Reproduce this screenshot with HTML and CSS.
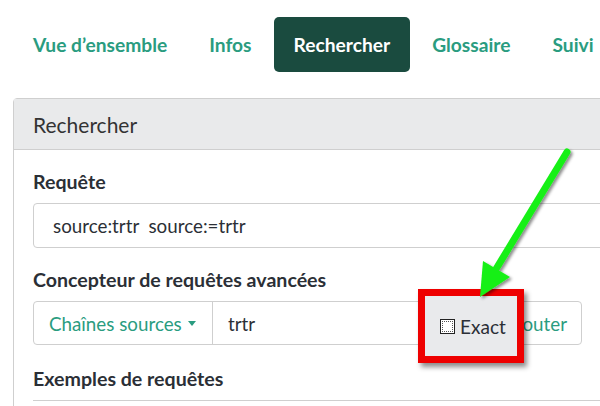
FILE: index.html
```html
<!DOCTYPE html>
<html lang="fr">
<head>
    <meta charset="UTF-8">
    <title>Rechercher</title>
    <link rel="stylesheet" href="styles.css">
</head>
<body>
    <!-- Onglets -->
    <nav class="tabs">
        <a class="tab" href="#">Vue d’ensemble</a>
        <a class="tab" href="#">Infos</a>
        <a class="tab active" href="#">Rechercher</a>
        <a class="tab" href="#">Glossaire</a>
        <a class="tab" href="#">Suivi</a>
    </nav>

    <!-- Panneau de recherche -->
    <section class="panel">
        <div class="panel-heading">Rechercher</div>
        <div class="panel-body">
            <label class="field-label">Requête</label>
            <div class="query-input">source:trtr&nbsp; source:=trtr</div>

            <label class="field-label">Concepteur de requêtes avancées</label>
            <div class="input-group">
                <div class="dropdown-btn">Chaînes sources <span class="caret"></span></div>
                <div class="group-text">trtr</div>
                <div class="group-addon"></div>
                <div class="group-btn">Ajouter</div>
            </div>

            <label class="field-label">Exemples de requêtes</label>
            <div class="table-top"></div>
        </div>
    </section>

    <!-- Annotation : case « Exact » encadrée -->
    <div class="highlight">
        <span class="check"></span>Exact
    </div>
    <svg class="arrow" width="600" height="406" viewBox="0 0 600 406">
        <defs>
            <filter id="shadow" x="-20%" y="-20%" width="140%" height="140%">
                <feDropShadow dx="2" dy="2" stdDeviation="1.5" flood-color="#000" flood-opacity="0.45"/>
            </filter>
        </defs>
        <g filter="url(#shadow)">
            <line x1="567" y1="152" x2="493" y2="274" stroke="#16f016" stroke-width="7" stroke-linecap="round"/>
            <polygon points="480,297 483,261 510,277" fill="#16f016"/>
        </g>
    </svg>
</body>
</html>
```

FILE: styles.css
```css
/* Base */
html, body {
    margin: 0;
    padding: 0;
    overflow: hidden;
    height: 406px;
}
body {
    font-family: Lato, "Open Sans", sans-serif;
    color: #2b2f36;
    background: #fff;
    position: relative;
}

/* Onglets */
.tabs {
    display: flex;
    gap: 2px;
    padding: 17px 0 0 13px;
    height: 55px;
    white-space: nowrap;
}
.tab {
    display: flex;
    align-items: center;
    padding: 0 20px;
    border-radius: 5px;
    color: #2a9c80;
    font-weight: 700;
    font-size: 19.2px;
    text-decoration: none;
}
.tab.active {
    background: #1a4b3f;
    color: #fff;
}

/* Panneau */
.panel {
    margin: 26px 0 0 13px;
    width: 640px;
    border: 1px solid #cfcfcf;
    border-radius: 4px;
}
.panel-heading {
    height: 50px;
    display: flex;
    align-items: center;
    padding-left: 19px;
    background: #e9eaeb;
    border-bottom: 1px solid #cfcfcf;
    font-size: 21px;
    color: #333;
}
.panel-body {
    padding: 20px 0 0 19px;
}
.field-label {
    display: block;
    font-weight: 700;
    font-size: 19.6px;
    line-height: 24px;
    margin-bottom: 9px;
}
.query-input {
    height: 43px;
    border: 1px solid #cfcfcf;
    border-radius: 4px;
    display: flex;
    align-items: center;
    padding-left: 19px;
    font-size: 18.8px;
    margin-bottom: 20px;
}

/* Groupe de saisie */
.input-group {
    width: 547px;
    height: 42px;
    border: 1px solid #cfcfcf;
    border-radius: 4px;
    display: flex;
    font-size: 18.8px;
    margin-bottom: 22px;
}
.dropdown-btn {
    width: 163px;
    padding-left: 15px;
    display: flex;
    align-items: center;
    color: #2a9c80;
    border-right: 1px solid #cfcfcf;
}
.caret {
    display: inline-block;
    margin-left: 6px;
    border-left: 4px solid transparent;
    border-right: 4px solid transparent;
    border-top: 5px solid #2a9c80;
}
.group-text {
    flex: 1;
    padding-left: 15px;
    display: flex;
    align-items: center;
}
.group-addon {
    width: 70px;
    background: #e9eaec;
}
.group-btn {
    width: 82px;
    display: flex;
    align-items: center;
    justify-content: flex-end;
    padding-right: 14px;
    box-sizing: border-box;
    color: #2a9c80;
}
.table-top {
    border-top: 1px solid #cfcfcf;
    height: 10px;
}

/* Case à cocher */
.check {
    display: inline-block;
    width: 13px;
    height: 13px;
    border: 1px solid #222;
    outline: 1px dotted #555;
    outline-offset: -3px;
    background: #fff;
    margin-right: 5px;
}

/* Annotation */
.highlight {
    position: absolute;
    left: 418px;
    top: 289px;
    width: 77px;
    height: 60px;
    border: 7px solid #ee0000;
    background: #e9eaec;
    box-shadow: 3px 4px 5px rgba(0, 0, 0, 0.45);
    display: flex;
    align-items: center;
    padding-left: 15px;
    box-sizing: content-box;
    font-size: 19px;
    color: #2b2f36;
}
.arrow {
    position: absolute;
    left: 0;
    top: 0;
    pointer-events: none;
}
```
